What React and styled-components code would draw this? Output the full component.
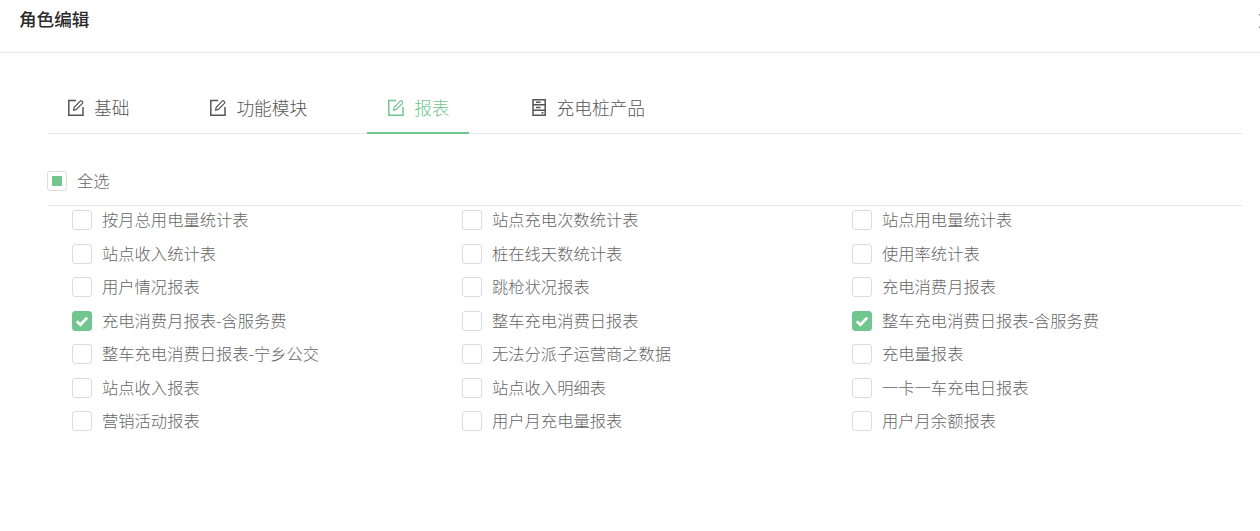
import React from "react";
import styled, { createGlobalStyle } from "styled-components";

const Global = createGlobalStyle`
  html, body { margin: 0; padding: 0; background: #fff; overflow: hidden; }
  body { font-family: "Noto Sans CJK SC", "Liberation Sans", sans-serif; }
`;
const GREEN = "#70c68e";
const Page = styled.div`width: 1260px; height: 531px; position: relative; overflow: hidden; background: #fff;`;
const Header = styled.header`height: 52px; border-bottom: 1px solid #e8e8e8;`;
const Title = styled.h2`margin: 0; padding-left: 19px; font-size: 17.6px; line-height: 38px; font-weight: 500; color: #2b2b2b;`;
const Close = styled.svg`position: absolute; left: 1259px; top: 14px; width: 14px; height: 14px;`;
const Body = styled.main`padding: 35px 17px 0 47px;`;
const Tabs = styled.nav`display: flex; gap: 41px; height: 45px; border-bottom: 1px solid #e8e8e8;`;
const Tab = styled.div`
  display: flex; align-items: center; gap: 10px; padding: 0 19px 6px 21px; box-sizing: content-box;
  font-size: 17.7px; font-weight: 300; color: ${p => (p.$active ? GREEN : "#555")};
  border-bottom: 2px solid ${p => (p.$active ? GREEN : "transparent")};
  height: 38px;
`;
const Icon = styled.svg`width: 16px; height: 17px; flex: none;`;
const AllRow = styled.div`display: flex; align-items: flex-start; padding-top: 37px; height: 34px; border-bottom: 1px solid #e8e8e8;`;
const Label = styled.label`display: flex; align-items: center; gap: 10px; font-size: 16.3px; font-weight: 300; line-height: 20px; color: #666;`;
const LabelText = styled.span`margin-top: -2px;`;
const Box = styled.span`
  width: 20px; height: 20px; box-sizing: border-box; flex: none; border-radius: 3px; display: flex; align-items: center; justify-content: center;
  border: 1px solid ${p => (p.$checked ? GREEN : "#dcdcdc")};
  background: ${p => (p.$checked ? GREEN : "#fff")};
`;
const Dot = styled.span`width: 10px; height: 10px; background: ${GREEN};`;
const Grid = styled.div`display: grid; grid-template-columns: repeat(3, 390px); grid-auto-rows: 33.5px; padding: 0 0 0 25px; margin-top: -2.5px;`;
const Cell = styled.div`display: flex; align-items: center;`;

const EditIcon = () => (
  <Icon viewBox="0 0 16 17" fill="none" stroke="currentColor">
    <path d="M8 1.500H.8v14.700H15V8" strokeWidth="1.500" />
    <path d="M5.600 11.100l.6-2.800 6-6.200c.5-.5 1.100-.5 1.600 0l.6.6c.5.5.5 1.100 0 1.600l-6 6.100z" strokeWidth="1.200" />
  </Icon>
);
const ServerIcon = () => (
  <Icon viewBox="0 0 16 17" fill="none" stroke="currentColor" strokeWidth="1.500">
    <path d="M2 .8h12.200v15.400H2zM2 5.800h12.200M2 11.200h12.200M5 3.300h4.500M5 8.500h4.500" />
    <path d="M10.500 13.800h2" />
  </Icon>
);
const Check = () => (
  <svg width="14" height="14" viewBox="0 0 14 14" fill="none"><path d="M1.800 7.200l3.600 3.500L12.200 3.600" stroke="#fff" strokeWidth="2.800" /></svg>
);

const items = [
  ["按月总用电量统计表"], ["站点充电次数统计表"], ["站点用电量统计表"],
  ["站点收入统计表"], ["桩在线天数统计表"], ["使用率统计表"],
  ["用户情况报表"], ["跳枪状况报表"], ["充电消费月报表"],
  ["充电消费月报表-含服务费", true], ["整车充电消费日报表"], ["整车充电消费日报表-含服务费", true],
  ["整车充电消费日报表-宁乡公交"], ["无法分派子运营商之数据"], ["充电量报表"],
  ["站点收入报表"], ["站点收入明细表"], ["一卡一车充电日报表"],
  ["营销活动报表"], ["用户月充电量报表"], ["用户月余额报表"],
];

export default function App() {
  return (
    <Page>
      <Global />
      <Header><Title>角色编辑</Title></Header>
      <Close viewBox="0 0 14 14" stroke="#888" strokeWidth="1.400"><path d="M0 0l14 14M14 0L0 14" /></Close>
      <Body>
        <Tabs>
          <Tab><EditIcon />基础</Tab>
          <Tab><EditIcon />功能模块</Tab>
          <Tab $active><EditIcon />报表</Tab>
          <Tab><ServerIcon />充电桩产品</Tab>
        </Tabs>
        <AllRow>
          <Label><Box><Dot /></Box><LabelText>全选</LabelText></Label>
        </AllRow>
        <Grid>
          {items.map(([t, c]) => (
            <Cell key={t}>
              <Label><Box $checked={c}>{c && <Check />}</Box><LabelText>{t}</LabelText></Label>
            </Cell>
          ))}
        </Grid>
      </Body>
    </Page>
  );
}
